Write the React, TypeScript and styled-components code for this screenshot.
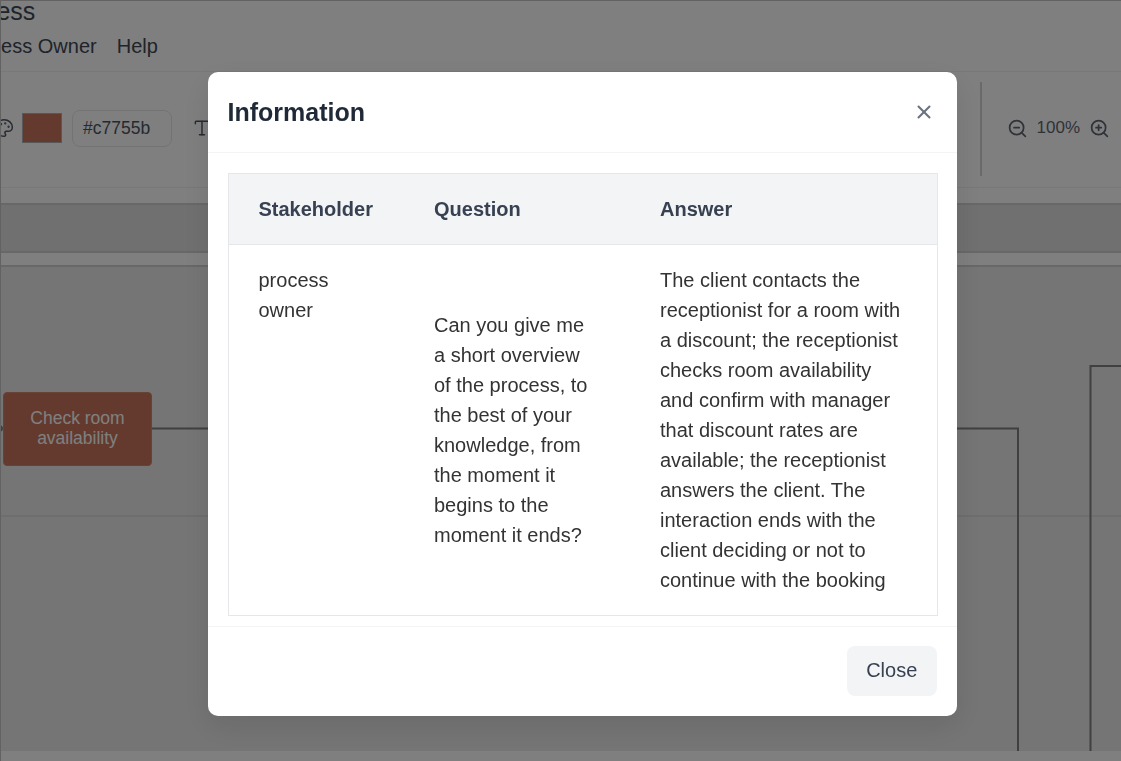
import React from "react";
import styled, { createGlobalStyle } from "styled-components";
import { Palette, Type, ZoomIn, ZoomOut, X } from "lucide-react";

const Global = createGlobalStyle`
  html, body { margin: 0; padding: 0; height: 100%; overflow: hidden; background: #fff; }
  body { font-family: "Liberation Sans", Arial, sans-serif; color: #1f2937; }
  * { box-sizing: border-box; }
`;

const Page = styled.div`
  height: 761px;
  width: 1121px;
  overflow: hidden;
  border-top: 1px solid #c4c4c4;
  border-left: 1px solid #c4c4c4;
  display: flex;
  flex-direction: column;
  background: #fff;
`;

const Header = styled.header`
  height: 71px;
  flex: none;
  border-bottom: 1px solid #f0f0f0;
`;

const Title = styled.div`
  font-size: 25px;
  line-height: 20px;
  margin-left: -56px;
  color: #404854;
`;

const Nav = styled.nav`
  display: flex;
  gap: 20px;
  font-size: 20px;
  line-height: 30px;
  margin: 10px 0 0 -41px;
  color: #404854;
`;

const Toolbar = styled.div`
  height: 116px;
  flex: none;
  display: flex;
  align-items: center;
  margin-left: -7px;
  padding-bottom: 3px;
  border-bottom: 1px solid #f0f0f0;
  color: #4b5563;
`;

const Swatch = styled.div<{ $color: string }>`
  width: 40px;
  height: 30px;
  margin-left: 8px;
  background: ${(p) => p.$color};
  border: 1px solid #b0b0b0;
`;

const HexField = styled.div`
  width: 100px;
  height: 37px;
  margin-left: 10px;
  padding-left: 10px;
  border: 1px solid #e5e7eb;
  border-radius: 8px;
  font-size: 17.5px;
  line-height: 35px;
  color: #4b5563;
`;

const TextTool = styled.div`
  margin-left: 20px;
  display: flex;
`;

const Spacer = styled.div`
  flex: 1;
`;

const Divider = styled.div`
  width: 2px;
  height: 94px;
  margin: 2px 25px 0 0;
  background: #d4d4d4;
`;

const ZoomGroup = styled.div`
  display: flex;
  align-items: center;
  gap: 9px;
  font-size: 17px;
  color: #5f6672;
  margin-right: 11px;
`;

const GapStrip = styled.div`
  height: 15px;
  flex: none;
  background: #fff;
`;

const Tabs = styled.div`
  height: 50px;
  flex: none;
  background: #e0e0e0;
  border-top: 2px solid #d0d0d0;
  border-bottom: 2px solid #d0d0d0;
`;

const SubStrip = styled.div`
  height: 14px;
  flex: none;
  background: #fff;
  border-bottom: 2px solid #d0d0d0;
`;

const Canvas = styled.div`
  position: relative;
  height: 484px;
  flex: none;
  background: #ebebeb;
`;

const Lane = styled.div`
  height: 250px;
  border-bottom: 2px solid #dcdcdc;
`;

const Wires = styled.svg`
  position: absolute;
  left: -1px;
  top: 0;
`;

const TaskNode = styled.div`
  position: absolute;
  left: 2px;
  top: 125px;
  width: 149px;
  height: 74px;
  padding: 15px 6px;
  border: 1px solid #d0856c;
  border-radius: 4px;
  background: #c7755b;
  color: #fff;
  font-size: 17.5px;
  line-height: 20px;
  text-align: center;
`;

const Overlay = styled.div`
  position: fixed;
  inset: 0;
  background: rgba(0, 0, 0, 0.5);
`;

const Modal = styled.div`
  position: fixed;
  left: 207.5px;
  top: 72px;
  width: 749.5px;
  height: 644px;
  display: flex;
  flex-direction: column;
  background: #fff;
  border-radius: 10px;
  box-shadow: 0 10px 30px rgba(0, 0, 0, 0.1);
`;

const ModalHeader = styled.div`
  height: 81px;
  flex: none;
  display: flex;
  align-items: center;
  justify-content: space-between;
  padding: 0 22px 0 20px;
  border-bottom: 1px solid #f3f4f6;
`;

const ModalTitle = styled.h2`
  margin: 0;
  font-size: 25px;
  line-height: 38px;
  font-weight: 700;
  color: #1f2937;
`;

const CloseIcon = styled.button`
  display: flex;
  padding: 0;
  border: 0;
  background: none;
  color: #6b7280;
`;

const ModalBody = styled.div`
  flex: 1;
  min-height: 0;
  padding: 20px 20px 0;
`;

const Table = styled.table`
  width: 100%;
  table-layout: fixed;
  border-collapse: collapse;
  border: 1px solid #e5e7eb;
  font-size: 20px;
  line-height: 30px;
`;

const HeadCell = styled.th<{ $width: number }>`
  width: ${(p) => p.$width}px;
  padding: 20px 30px;
  text-align: left;
  font-weight: 700;
  background: #f3f4f6;
  border-bottom: 1px solid #e5e7eb;
  color: #374151;
`;

const Cell = styled.td<{ $align: string }>`
  padding: 20px 30px;
  vertical-align: ${(p) => p.$align};
  color: #333333;
`;

const ModalFooter = styled.div`
  height: 90px;
  flex: none;
  display: flex;
  align-items: center;
  justify-content: flex-end;
  padding: 0 20px 2px;
  border-top: 1px solid #f3f4f6;
`;

const CloseButton = styled.button`
  width: 90.5px;
  height: 50px;
  border: 0;
  border-radius: 8px;
  background: #f3f4f6;
  color: #374151;
  font-family: inherit;
  font-size: 20px;
`;

export default function App() {
  return (
    <>
      <Global />
      <Page>
        <Header>
          <Title>Process</Title>
          <Nav>
            <span>Process Owner</span>
            <span>Help</span>
          </Nav>
        </Header>
        <Toolbar>
          <Palette size={20} strokeWidth={1.75} />
          <Swatch $color="#c7755b" />
          <HexField>#c7755b</HexField>
          <TextTool>
            <Type size={20} strokeWidth={1.75} />
          </TextTool>
          <Spacer />
          <Divider />
          <ZoomGroup>
            <ZoomOut size={21} strokeWidth={2} />
            <span>100%</span>
            <ZoomIn size={21} strokeWidth={2} />
          </ZoomGroup>
        </Toolbar>
        <GapStrip />
        <Tabs />
        <SubStrip />
        <Canvas>
          <Lane />
          <Wires width="1121" height="484" viewBox="0 0 1121 484" fill="none">
            <path d="M152 161.5H1018V484" stroke="#808080" strokeWidth="2" />
            <path d="M1121 99H1090.5V484" stroke="#808080" strokeWidth="2" />
            <circle cx="0" cy="161.5" r="3" fill="#808080" />
          </Wires>
          <TaskNode>Check room availability</TaskNode>
        </Canvas>
      </Page>
      <Overlay />
      <Modal>
        <ModalHeader>
          <ModalTitle>Information</ModalTitle>
          <CloseIcon aria-label="Close">
            <X size={22} strokeWidth={2.25} />
          </CloseIcon>
        </ModalHeader>
        <ModalBody>
          <Table>
            <thead>
              <tr>
                <HeadCell $width={176}>Stakeholder</HeadCell>
                <HeadCell $width={226}>Question</HeadCell>
                <HeadCell $width={307}>Answer</HeadCell>
              </tr>
            </thead>
            <tbody>
              <tr>
                <Cell $align="top">process owner</Cell>
                <Cell $align="middle">
                  Can you give me a short overview of the process, to the best of your knowledge, from the moment it begins to the moment it ends?
                </Cell>
                <Cell $align="top">
                  The client contacts the receptionist for a room with a discount; the receptionist checks room availability and confirm with manager that discount rates are available; the receptionist answers the client. The interaction ends with the client deciding or not to continue with the booking
                </Cell>
              </tr>
            </tbody>
          </Table>
        </ModalBody>
        <ModalFooter>
          <CloseButton>Close</CloseButton>
        </ModalFooter>
      </Modal>
    </>
  );
}
